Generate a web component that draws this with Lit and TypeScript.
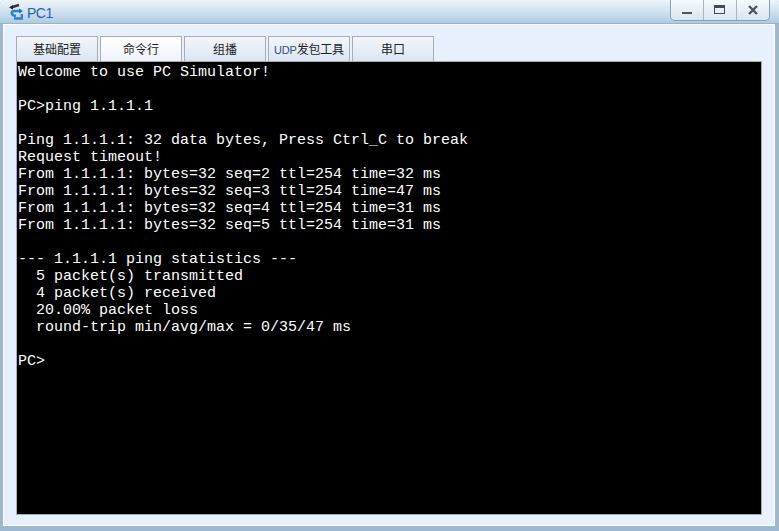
import { LitElement, html, css } from "lit";
import { customElement } from "lit/decorators.js";

const OUTPUT = `Welcome to use PC Simulator!

PC>ping 1.1.1.1

Ping 1.1.1.1: 32 data bytes, Press Ctrl_C to break
Request timeout!
From 1.1.1.1: bytes=32 seq=2 ttl=254 time=32 ms
From 1.1.1.1: bytes=32 seq=3 ttl=254 time=47 ms
From 1.1.1.1: bytes=32 seq=4 ttl=254 time=31 ms
From 1.1.1.1: bytes=32 seq=5 ttl=254 time=31 ms

--- 1.1.1.1 ping statistics ---
  5 packet(s) transmitted
  4 packet(s) received
  20.00% packet loss
  round-trip min/avg/max = 0/35/47 ms

PC>`;

@customElement("app-root")
export class AppRoot extends LitElement {
  static styles = css`
    :host {
      display: block;
      width: 779px;
      height: 531px;
      font-family: "Noto Sans CJK SC", "Liberation Sans", sans-serif;
      overflow: hidden;
    }
    .window {
      box-sizing: border-box;
      width: 779px;
      height: 531px;
      display: flex;
      flex-direction: column;
      background: #9db8cf;
      border-radius: 4px 4px 0 0;
      padding: 0 4px 5px 3px;
    }
    .titlebar {
      box-sizing: border-box;
      height: 24px;
      flex: none;
      margin: 0 -4px 0 -3px;
      padding-left: 9px;
      display: flex;
      align-items: flex-start;
      gap: 4px;
      background: linear-gradient(to bottom, #eff5fa 0%, #d3e3f1 45%, #aecbe4 100%);
      border-bottom: 1px solid #95b3cb;
      position: relative;
      border-radius: 4px 4px 0 0;
    }
    .logo {
      width: 14px;
      height: 18px;
      margin-top: 3px;
      flex: none;
    }
    .title {
      font-family: "Liberation Sans", sans-serif;
      font-size: 14px;
      line-height: 16px;
      margin-top: 5px;
      letter-spacing: -0.5px;
      color: #2a62a6;
    }
    .controls {
      position: absolute;
      top: 0;
      right: 9px;
      width: 100px;
      height: 21px;
      display: flex;
      box-sizing: border-box;
      border: 1px solid #8f9fae;
      border-top: none;
      border-radius: 0 0 5px 5px;
      background: linear-gradient(to bottom, #f6f9fc, #d9e6f1);
    }
    .ctl {
      flex: 1;
      display: flex;
      align-items: center;
      justify-content: center;
      border-left: 1px solid #a9b6c2;
    }
    .ctl:first-child { border-left: none; }
    .ctl svg { display: block; }
    .client {
      flex: 1;
      min-height: 0;
      display: flex;
      flex-direction: column;
      background: #e9f0fd;
      border: 1px solid #ffffff;
      padding: 11px 12px 10px 12px;
      box-sizing: border-box;
    }
    .tabs {
      display: flex;
      gap: 2px;
      height: 25px;
      flex: none;
    }
    .tab {
      box-sizing: border-box;
      width: 82px;
      height: 25px;
      border: 1px solid #a9adb3;
      border-bottom: none;
      background: linear-gradient(to bottom, #f3f6fa, #dbe5f2);
      font-size: 12px;
      line-height: 24px;
      text-align: center;
      color: #222;
    }
    .tab.active {
      background: linear-gradient(to bottom, #ffffff, #eef3fb);
    }
    .tab .udp {
      font-family: "Liberation Sans", sans-serif;
      color: #33507f;
      font-size: 11px;
    }
    .tab.small { white-space: nowrap; letter-spacing: -0.2px; }
    .term {
      flex: 1;
      min-height: 0;
      box-sizing: border-box;
      background: #000;
      border: 1px solid #a9adb3;
      color: #fff;
      margin: 0;
      padding: 2px 0 0 1px;
      font-family: "Liberation Mono", monospace;
      font-size: 15px;
      line-height: 17px;
      white-space: pre;
      overflow: hidden;
    }
  `;

  render() {
    return html`
      <div class="window">
        <div class="titlebar">
          <svg class="logo" viewBox="0 0 14 18">
            <path d="M2 4.5 L10 2" stroke="#333" stroke-width="2.4" fill="none"/>
            <path d="M0 4.5 L4 2 V6.5 z" fill="#222"/>
            <path d="M11 8 H5 Q2 8.5 3 11 Q4 12.5 7 13" stroke="#2d82d2" stroke-width="2.6" fill="none"/>
            <path d="M10 5.5 L14 8 L10 10.5 z" fill="#1f6fc0"/>
            <path d="M13 11 V15.5 H5" stroke="#2d82d2" stroke-width="2.6" fill="none"/>
          </svg>
          <span class="title">PC1</span>
          <div class="controls">
            <div class="ctl">
              <svg width="12" height="12" viewBox="0 0 12 12"><rect x="1" y="8" width="10" height="2" fill="#4a5560"/></svg>
            </div>
            <div class="ctl">
              <svg width="12" height="10" viewBox="0 0 12 10"><rect x=".5" y=".5" width="10" height="8" fill="none" stroke="#3f4a55"/><rect x="0" y="0" width="11" height="3" fill="#3f4a55"/></svg>
            </div>
            <div class="ctl">
              <svg width="10" height="10" viewBox="0 0 10 10"><path d="M1 1 L9 9 M9 1 L1 9" stroke="#4a5560" stroke-width="2.4"/></svg>
            </div>
          </div>
        </div>
        <div class="client">
          <div class="tabs">
            <div class="tab">基础配置</div>
            <div class="tab active">命令行</div>
            <div class="tab">组播</div>
            <div class="tab small"><span class="udp">UDP</span>发包工具</div>
            <div class="tab">串口</div>
          </div>
          <pre class="term">${OUTPUT}</pre>
        </div>
      </div>
    `;
  }
}
